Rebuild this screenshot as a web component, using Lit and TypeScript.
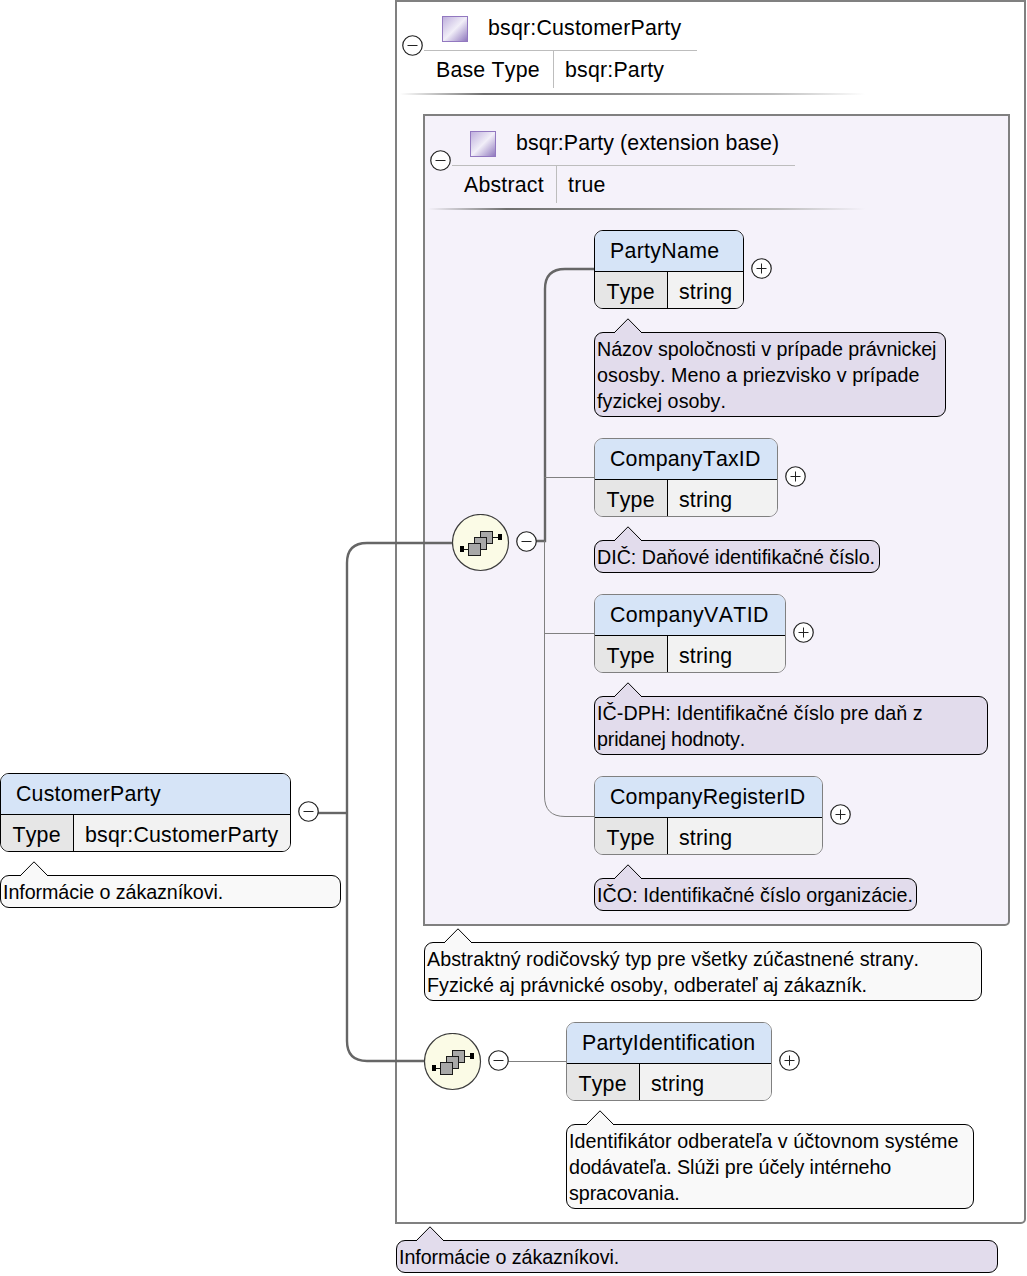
import { LitElement, html, css, svg } from "lit";
import { customElement, property } from "lit/decorators.js";

const FONT = css`"Liberation Sans", Arial, sans-serif`;

@customElement("xs-toggle")
class XsToggle extends LitElement {
  @property({ type: Boolean }) plus = false;
  static styles = css`
    :host { display: block; width: 21px; height: 21px; }
    svg { display: block; }
  `;
  render() {
    return html`<svg width="21" height="21" viewBox="0 0 21 21">
      <circle cx="10.5" cy="10.5" r="9.75" fill="#fff" stroke="#222" stroke-width="1.2"></circle>
      <path d="M5.5 10.5h10" stroke="#222" stroke-width="1"></path>
      ${this.plus ? svg`<path d="M10.5 5.5v10" stroke="#222" stroke-width="1"></path>` : ""}
    </svg>`;
  }
}

@customElement("xs-sequence")
class XsSequence extends LitElement {
  static styles = css`
    :host { display: block; width: 58px; height: 58px; }
    svg { display: block; }
  `;
  render() {
    return html`<svg width="58" height="58" viewBox="0 0 58 58">
      <circle cx="28.5" cy="28.5" r="28" fill="#fbfbe6" stroke="#3c3c3c" stroke-width="1.2"></circle>
      <path d="M11 35.5h6M41 23.5h6" stroke="#111" stroke-width="1" fill="none"></path>
      <rect x="8" y="32" width="4" height="6" fill="#000"></rect>
      <rect x="46" y="20" width="4" height="6" fill="#000"></rect>
      <rect x="28.5" y="17.5" width="12" height="12" fill="#a8a8a8" stroke="#1a1a1a"></rect>
      <rect x="22.5" y="23.5" width="12" height="12" fill="#a8a8a8" stroke="#1a1a1a"></rect>
      <rect x="16.5" y="29.5" width="12" height="12" fill="#a8a8a8" stroke="#1a1a1a"></rect>
    </svg>`;
  }
}

@customElement("xs-node")
class XsNode extends LitElement {
  @property() name = "";
  @property() type = "string";
  @property({ type: Number }) typeWidth = 72;
  @property({ type: Number }) nameSpacing = 0.2;
  @property({ type: Boolean }) optional = false;
  static styles = css`
    :host {
      display: block;
      font: 21.33px/26px ${FONT};
      font-kerning: none;
      letter-spacing: 0.2px;
      color: #000;
    }
    .box {
      height: 79px;
      box-sizing: border-box;
      border: 1px solid #000;
      border-radius: 9px;
      overflow: hidden;
      display: flex;
      flex-direction: column;
    }
    .box.optional { border-color: #808080; }
    .head {
      height: 40px;
      flex: none;
      box-sizing: border-box;
      padding: 7px 0 0 15px;
      background: #d6e4f7;
      white-space: nowrap;
    }
    .rule { height: 1px; flex: none; background: #000; }
    .row { flex: 1; display: flex; white-space: nowrap; }
    .key {
      flex: none;
      box-sizing: border-box;
      padding: 7px 0 0 11.5px;
      background: #e6e6e6;
      border-right: 1px solid #000;
    }
    .val { flex: 1; padding: 7px 0 0 11px; background: #f2f2f2; }
  `;
  render() {
    return html`<div class="box ${this.optional ? "optional" : ""}">
      <div class="head" style="letter-spacing:${this.nameSpacing}px">${this.name}</div>
      <div class="rule"></div>
      <div class="row">
        <div class="key" style="width:${this.typeWidth}px">Type</div>
        <div class="val">${this.type}</div>
      </div>
    </div>`;
  }
}

type Line = [text: string, dx: number];

@customElement("xs-comment")
class XsComment extends LitElement {
  @property({ type: Array }) lines: Line[] = [];
  @property() tone: "purple" | "light" = "light";
  static styles = css`
    :host {
      display: block;
      position: relative;
      font: 19.7px/26px ${FONT};
      font-kerning: none;
      color: #000;
    }
    .box {
      box-sizing: border-box;
      border: 1px solid #000;
      border-radius: 9px;
      padding: 3px 2px 2px 2px;
      white-space: nowrap;
      min-height: 33px;
    }
    .line { display: block; }
    .light .box { background: #f9f9f9; }
    .purple .box { background: #e2dcec; }
    svg { position: absolute; left: 19px; top: -14px; display: block; }
    .light path { fill: #f9f9f9; }
    .purple path { fill: #e2dcec; }
    path { stroke: #000; stroke-width: 1; }
  `;
  render() {
    return html`<div class=${this.tone}>
      <div class="box">${this.lines.map(([t, dx]) => html`<span class="line" style="letter-spacing:${(dx / t.length).toFixed(3)}px">${t}</span>`)}</div>
      <svg width="30" height="16" viewBox="0 0 30 16"><path d="M1 15 L15 .8 L29 15"></path></svg>
    </div>`;
  }
}

@customElement("xs-typehead")
class XsTypeHead extends LitElement {
  @property() title = "";
  @property() key = "";
  @property() value = "";
  @property({ type: Number }) keyWidth = 0;
  @property({ type: Number }) ruleWidth = 0;
  @property({ type: Number }) shadowWidth = 0;
  @property({ type: Number }) titleSpacing = 0.2;
  static styles = css`
    :host {
      display: block;
      font: 21.33px/26px ${FONT};
      font-kerning: none;
      letter-spacing: 0.2px;
      color: #000;
      white-space: nowrap;
    }
    .title { display: flex; align-items: flex-start; height: 50px; padding: 16px 0 0 18px; gap: 20px; box-sizing: border-box; }
    .swatch {
      width: 26px; height: 26px; box-sizing: border-box; flex: none;
      border: 1px solid #9278c0;
      background: linear-gradient(135deg, #bfb0dd 0%, #f1eef8 50%, #9079be 100%);
    }
    .name { margin-top: -1px; }
    .rule { height: 1px; background: #bdbdbd; }
    .row { display: flex; height: 37px; }
    .k { box-sizing: border-box; padding: 6px 0 0 12px; border-right: 1px solid #bdbdbd; }
    .v { padding: 6px 0 0 11px; }
    .shadow {
      height: 2px; margin-top: 5px; margin-left: -24px;
      background: linear-gradient(90deg, rgba(128,128,128,0), #707070 18%, #8c8c8c 45%, #bcbcbc 80%, rgba(128,128,128,0));
    }
  `;
  render() {
    return html`<div class="title"><div class="swatch"></div><div class="name" style="letter-spacing:${this.titleSpacing}px">${this.title}</div></div>
      <div class="rule" style="width:${this.ruleWidth}px"></div>
      <div class="row"><div class="k" style="width:${this.keyWidth}px">${this.key}</div><div class="v">${this.value}</div></div>
      <div class="shadow" style="width:${this.shadowWidth}px"></div>`;
  }
}

interface NodeDef { name: string; type: string; x: number; y: number; w: number; typeW: number; optional: boolean; spacing: number }
interface CommentDef { lines: Line[]; tone: "purple" | "light"; x: number; y: number; w: number }

const NODES: NodeDef[] = [
  { name: "CustomerParty", type: "bsqr:CustomerParty", x: 0, y: 773, w: 291, typeW: 73, optional: false, spacing: 0.2 },
  { name: "PartyName", type: "string", x: 594, y: 230, w: 150, typeW: 73, optional: false, spacing: 0.3 },
  { name: "CompanyTaxID", type: "string", x: 594, y: 438, w: 184, typeW: 73, optional: true, spacing: 0.2 },
  { name: "CompanyVATID", type: "string", x: 594, y: 594, w: 192, typeW: 73, optional: true, spacing: 0.4 },
  { name: "CompanyRegisterID", type: "string", x: 594, y: 776, w: 229, typeW: 73, optional: true, spacing: 0.2 },
  { name: "PartyIdentification", type: "string", x: 566, y: 1022, w: 206, typeW: 73, optional: true, spacing: 0.2 },
];

const COMMENTS: CommentDef[] = [
  { lines: [["Informácie o zákazníkovi.", -2]], tone: "light", x: 0, y: 875, w: 341 },
  { lines: [["Názov spoločnosti v prípade právnickej", -2], ["ososby. Meno a priezvisko v prípade", 3], ["fyzickej osoby.", 1]], tone: "purple", x: 594, y: 332, w: 352 },
  { lines: [["DIČ: Daňové identifikačné číslo.", -1]], tone: "purple", x: 594, y: 540, w: 286 },
  { lines: [["IČ-DPH: Identifikačné číslo pre daň z", 3], ["pridanej hodnoty.", -3]], tone: "purple", x: 594, y: 696, w: 394 },
  { lines: [["IČO: Identifikačné číslo organizácie.", 2]], tone: "purple", x: 594, y: 878, w: 323 },
  { lines: [["Abstraktný rodičovský typ pre všetky zúčastnené strany.", 3], ["Fyzické aj právnické osoby, odberateľ aj zákazník.", 1]], tone: "light", x: 424, y: 942, w: 558 },
  { lines: [["Identifikátor odberateľa v účtovnom systéme", 3], ["dodávateľa. Slúži pre účely intérneho", -2], ["spracovania.", -1]], tone: "light", x: 566, y: 1124, w: 408 },
  { lines: [["Informácie o zákazníkovi.", -2]], tone: "purple", x: 396, y: 1240, w: 602 },
];

const TOGGLES: { x: number; y: number; plus: boolean }[] = [
  { x: 298, y: 801, plus: false },
  { x: 402, y: 35, plus: false },
  { x: 430, y: 150, plus: false },
  { x: 516, y: 531, plus: false },
  { x: 488, y: 1050, plus: false },
  { x: 751, y: 258, plus: true },
  { x: 785, y: 466, plus: true },
  { x: 793, y: 622, plus: true },
  { x: 830, y: 804, plus: true },
  { x: 779, y: 1050, plus: true },
];

const THICK = [
  "M318 813H347",
  "M452 543H367Q347 543 347 563V1041Q347 1061 367 1061H424",
  "M536 541H545V289Q545 269 565 269H594",
];
const THIN = [
  "M544.5 477.5H594",
  "M544.5 633.5H594",
  "M544.5 541V796Q544.5 816.5 565 816.5H594",
  "M508 1061.5H566",
];

@customElement("app-root")
export class AppRoot extends LitElement {
  static styles = css`
    :host {
      display: block;
      position: relative;
      width: 1027px;
      height: 1276px;
      background: #fff;
      overflow: hidden;
    }
    .item { position: absolute; }
    .outer {
      position: absolute; left: 395px; top: 0; width: 631px; height: 1224px;
      box-sizing: border-box;
      border: 2px solid #808080;
      border-radius: 0 0 5px 0;
      background: #fff;
    }
    .inner {
      position: absolute; left: 423px; top: 114px; width: 587px; height: 812px;
      box-sizing: border-box;
      border: 2px solid #808080;
      border-radius: 0 0 5px 0;
      background: #f5f2fa;
    }
    .wires { position: absolute; left: 0; top: 0; }
    .wires path { fill: none; }
    .thick { stroke: #666; stroke-width: 2.4; }
    .thin { stroke: #808080; stroke-width: 1; }
  `;
  render() {
    return html`
      <div class="outer"></div>
      <div class="inner"></div>
      <xs-typehead class="item" style="left:424px;top:0;width:600px"
        title="bsqr:CustomerParty" key="Base Type" value="bsqr:Party"
        .keyWidth=${130} .ruleWidth=${273} .shadowWidth=${465}></xs-typehead>
      <xs-typehead class="item" style="left:452px;top:115px;width:550px"
        title="bsqr:Party (extension base)" key="Abstract" value="true"
        .keyWidth=${105} .ruleWidth=${343} .shadowWidth=${437} .titleSpacing=${0.09}></xs-typehead>
      <svg class="wires" width="1027" height="1276" viewBox="0 0 1027 1276">
        ${THICK.map((d) => svg`<path class="thick" d=${d}></path>`)}
        ${THIN.map((d) => svg`<path class="thin" d=${d}></path>`)}
      </svg>
      <xs-sequence class="item" style="left:452px;top:514px"></xs-sequence>
      <xs-sequence class="item" style="left:424px;top:1033px"></xs-sequence>
      ${TOGGLES.map((t) => html`<xs-toggle class="item" style="left:${t.x}px;top:${t.y}px" ?plus=${t.plus}></xs-toggle>`)}
      ${COMMENTS.map((c) => html`<xs-comment class="item" style="left:${c.x}px;top:${c.y}px;width:${c.w}px" tone=${c.tone} .lines=${c.lines}></xs-comment>`)}
      ${NODES.map((n) => html`<xs-node class="item" style="left:${n.x}px;top:${n.y}px;width:${n.w}px" name=${n.name} type=${n.type} .typeWidth=${n.typeW} .nameSpacing=${n.spacing} ?optional=${n.optional}></xs-node>`)}
    `;
  }
}
